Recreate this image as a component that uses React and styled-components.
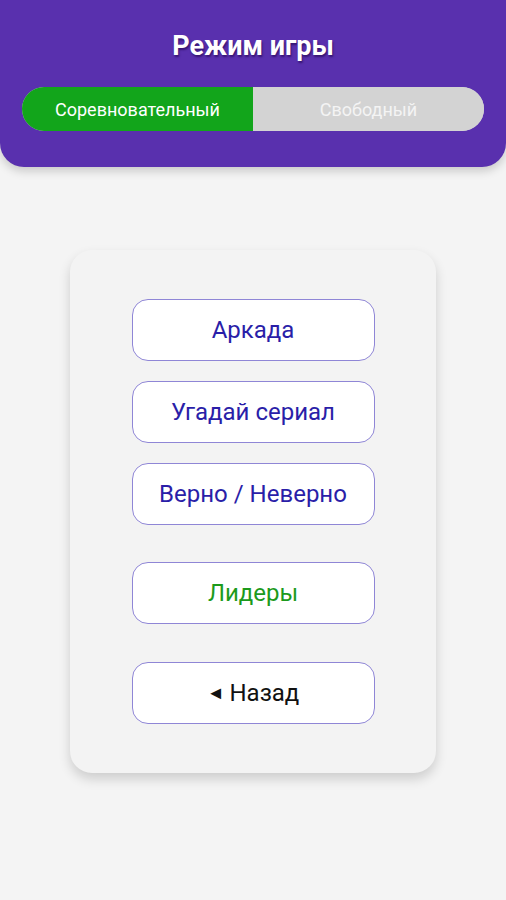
import React, { useState } from "react";
import styled, { createGlobalStyle } from "styled-components";

const GlobalStyle = createGlobalStyle`
  html, body {
    margin: 0;
    padding: 0;
    background: #f4f4f4;
    font-family: Roboto, "Noto Sans", "Liberation Sans", sans-serif;
  }
  * { box-sizing: border-box; }
`;

const Page = styled.div`
  min-height: 900px;
  display: flex;
  flex-direction: column;
  align-items: center;
  background: #f4f4f4;
`;

const Header = styled.header`
  width: 100%;
  height: 167px;
  background: #5930ae;
  border-radius: 0 0 24px 24px;
  box-shadow: 0 4px 10px rgba(0, 0, 0, 0.18);
  padding: 28px 22px 0;
  display: flex;
  flex-direction: column;
  align-items: center;
`;

const Title = styled.h1`
  margin: 0;
  height: 36px;
  line-height: 36px;
  color: #fff;
  font-size: 27px;
  font-weight: 700;
  text-shadow: 1px 2px 2px rgba(40, 10, 90, 0.7);
`;

const Toggle = styled.div`
  margin-top: 23px;
  width: 100%;
  height: 44px;
  border-radius: 22px;
  overflow: hidden;
  display: flex;
  background: #d3d3d3;
`;

const ToggleOption = styled.button`
  flex: 1 1 50%;
  border: none;
  margin: 0;
  padding: 0;
  font-family: inherit;
  font-size: 18px;
  color: ${p => (p.$active ? "#ffffff" : "#f4f4f4")};
  background: ${p => (p.$active ? "#12a51b" : "#d3d3d3")};
  cursor: pointer;
`;

const Card = styled.main`
  margin-top: 83px;
  width: 366px;
  padding: 49px 0;
  background: #f3f3f3;
  border-radius: 22px;
  box-shadow: 0 6px 12px rgba(0, 0, 0, 0.16);
  display: flex;
  flex-direction: column;
  align-items: center;
`;

const Group = styled.div`
  display: flex;
  flex-direction: column;
  gap: 20px;
  margin-top: ${p => p.$offset || 0}px;
`;

const MenuButton = styled.button`
  width: 243px;
  height: 62px;
  background: #fff;
  border: 1px solid #8f86d6;
  border-radius: 16px;
  font-family: inherit;
  font-size: 24px;
  color: ${p => p.$color || "#2a1ea8"};
  cursor: pointer;
`;

const Arrow = styled.span`
  font-size: 18px;
  vertical-align: 2px;
  margin-right: 5px;
`;

export default function App() {
  const [mode, setMode] = useState("comp");
  return (
    <>
      <GlobalStyle />
      <Page>
        <Header>
          <Title>Режим игры</Title>
          <Toggle>
            <ToggleOption $active={mode === "comp"} onClick={() => setMode("comp")}>
              Соревновательный
            </ToggleOption>
            <ToggleOption $active={mode === "free"} onClick={() => setMode("free")}>
              Свободный
            </ToggleOption>
          </Toggle>
        </Header>
        <Card>
          <Group>
            <MenuButton>Аркада</MenuButton>
            <MenuButton>Угадай сериал</MenuButton>
            <MenuButton>Верно / Неверно</MenuButton>
          </Group>
          <Group $offset={37}>
            <MenuButton $color="#1c9a1c">Лидеры</MenuButton>
          </Group>
          <Group $offset={38}>
            <MenuButton $color="#111">
              <Arrow>◄</Arrow>Назад
            </MenuButton>
          </Group>
        </Card>
      </Page>
    </>
  );
}
